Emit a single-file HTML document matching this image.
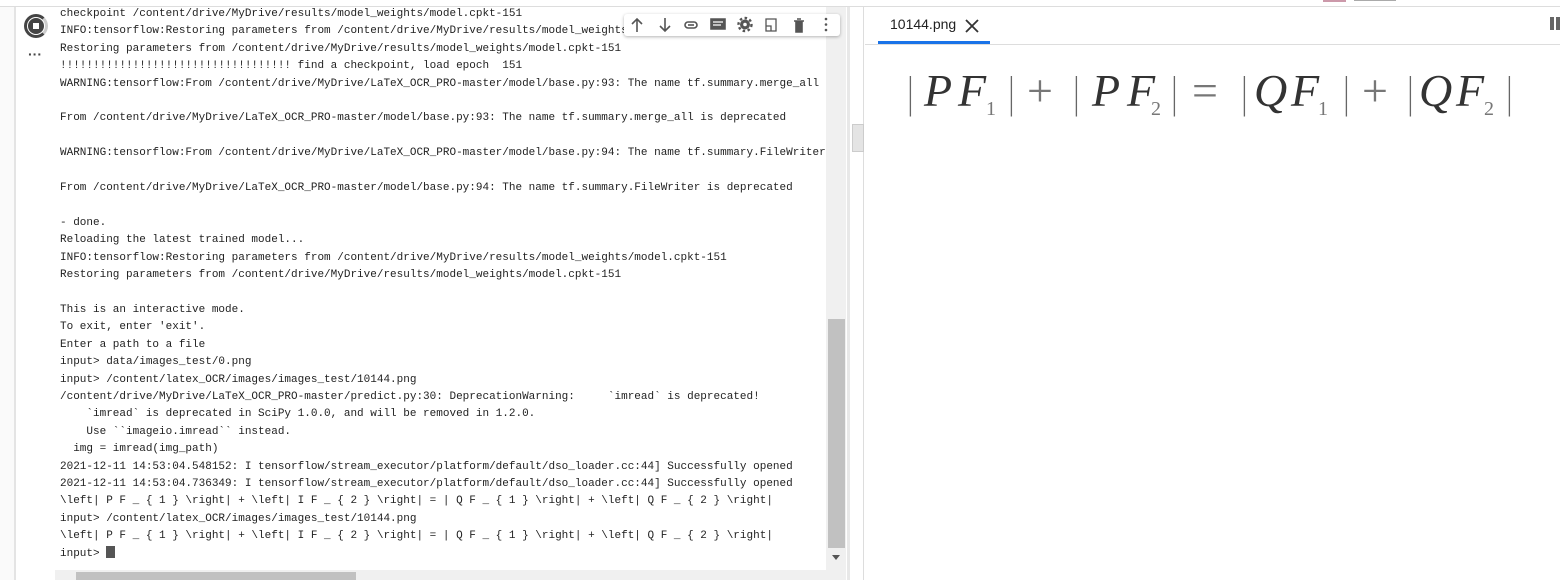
<!DOCTYPE html>
<html><head><meta charset="utf-8"><style>
*{margin:0;padding:0;box-sizing:border-box}
body{width:1560px;height:580px;overflow:hidden;background:#fff;position:relative;font-family:"Liberation Sans",sans-serif}
.abs{position:absolute}
pre{position:absolute;left:60px;top:6px;width:766px;overflow:hidden;font-family:"Liberation Mono","DejaVu Sans Mono","Courier New",monospace;font-size:11px;line-height:17.4px;color:#222;white-space:pre}
.f{position:absolute;font-family:"Liberation Serif","DejaVu Serif",serif;color:#333;top:66px;font-size:46px;line-height:50px}
.i{font-style:italic}
.s{font-size:20px;top:84px;color:#777}
.b{font-size:44px;font-style:normal;color:#666;top:68px;transform:scaleX(.6)}
.p{font-size:46px;font-style:normal;color:#777;top:66px}
</style></head><body>
<div class="abs" style="left:0;top:0;width:1560px;height:7px;background:#fff;border-bottom:1px solid #ddd"></div>
<div class="abs" style="left:14px;top:7px;width:2px;height:573px;background:#e4e4e4"></div>
<div class="abs" style="left:0;top:7px;width:14px;height:573px;background:#fafafa"></div>
<div class="abs" style="left:24px;top:14px;width:24px;height:24px;border-radius:50%;border:3px solid #444;border-right-color:#ccc"></div>
<div class="abs" style="left:28px;top:18px;width:16px;height:16px;border-radius:50%;background:#444"></div>
<div class="abs" style="left:33px;top:23px;width:6px;height:6px;background:#fff"></div>
<div class="abs" style="left:28px;top:50px;font-size:14px;color:#444;line-height:8px;font-weight:bold">&middot;&middot;&middot;</div>
<pre>checkpoint /content/drive/MyDrive/results/model_weights/model.cpkt-151
INFO:tensorflow:Restoring parameters from /content/drive/MyDrive/results/model_weights/model.cpkt-151
Restoring parameters from /content/drive/MyDrive/results/model_weights/model.cpkt-151
!!!!!!!!!!!!!!!!!!!!!!!!!!!!!!!!!!! find a checkpoint, load epoch  151
WARNING:tensorflow:From /content/drive/MyDrive/LaTeX_OCR_PRO-master/model/base.py:93: The name tf.summary.merge_all is deprecated

From /content/drive/MyDrive/LaTeX_OCR_PRO-master/model/base.py:93: The name tf.summary.merge_all is deprecated

WARNING:tensorflow:From /content/drive/MyDrive/LaTeX_OCR_PRO-master/model/base.py:94: The name tf.summary.FileWriter is deprecated

From /content/drive/MyDrive/LaTeX_OCR_PRO-master/model/base.py:94: The name tf.summary.FileWriter is deprecated

- done.
Reloading the latest trained model...
INFO:tensorflow:Restoring parameters from /content/drive/MyDrive/results/model_weights/model.cpkt-151
Restoring parameters from /content/drive/MyDrive/results/model_weights/model.cpkt-151

This is an interactive mode.
To exit, enter 'exit'.
Enter a path to a file
input&gt; data/images_test/0.png
input&gt; /content/latex_OCR/images/images_test/10144.png
/content/drive/MyDrive/LaTeX_OCR_PRO-master/predict.py:30: DeprecationWarning:     `imread` is deprecated!
    `imread` is deprecated in SciPy 1.0.0, and will be removed in 1.2.0.
    Use ``imageio.imread`` instead.
  img = imread(img_path)
2021-12-11 14:53:04.548152: I tensorflow/stream_executor/platform/default/dso_loader.cc:44] Successfully opened
2021-12-11 14:53:04.736349: I tensorflow/stream_executor/platform/default/dso_loader.cc:44] Successfully opened
\left| P F _ { 1 } \right| + \left| I F _ { 2 } \right| = | Q F _ { 1 } \right| + \left| Q F _ { 2 } \right|
input&gt; /content/latex_OCR/images/images_test/10144.png
\left| P F _ { 1 } \right| + \left| I F _ { 2 } \right| = | Q F _ { 1 } \right| + \left| Q F _ { 2 } \right|
input&gt; <span style="display:inline-block;width:9px;height:12px;background:#555;vertical-align:-2px"></span></pre>
<div class="abs" style="left:826px;top:7px;width:20px;height:573px;background:#f0f0f0"></div>
<div class="abs" style="left:828px;top:319px;width:17px;height:229px;background:#c1c1c1"></div>
<div class="abs" style="left:832px;top:555px;width:0;height:0;border-left:4px solid transparent;border-right:4px solid transparent;border-top:5px solid #555"></div>
<div class="abs" style="left:55px;top:570px;width:771px;height:10px;background:#f0f0f0"></div>
<div class="abs" style="left:76px;top:572px;width:280px;height:8px;background:#c1c1c1"></div>
<div class="abs" style="left:624px;top:14px;width:216px;height:22px;background:#fff;border-radius:3px;box-shadow:0 1px 3px rgba(0,0,0,.3)"></div>
<svg class="abs" style="left:624px;top:14px" width="216" height="22" viewBox="0 0 216 22" fill="none" stroke="#555" stroke-width="1.6">
<path d="M13 18V5M8 10l5-5 5 5"/><path d="M41 4v13M36 12l5 5 5-5"/>
<rect x="61" y="8" width="12" height="6" rx="3"/><path d="M64 11h6"/>
<path d="M87 5h14v10h-14z" fill="#555"/><path d="M89 8h10M89 11h8" stroke="#fff" stroke-width="1.2"/>
<circle cx="121" cy="10.5" r="5" fill="#555" stroke="none"/><circle cx="121" cy="10.5" r="6.5" stroke-dasharray="2.5 2.5" stroke-width="2.4"/><circle cx="121" cy="10.5" r="1.8" fill="#fff" stroke="none"/>
<path d="M142 5h10v12h-10z M142 12h5v5" stroke-width="1.3"/>
<path d="M170 7h10M172 7v11h6V7M173 5h4" fill="#555"/>
<circle cx="202" cy="5" r="1.3" fill="#555" stroke="none"/><circle cx="202" cy="10.5" r="1.3" fill="#555" stroke="none"/><circle cx="202" cy="16" r="1.3" fill="#555" stroke="none"/>
</svg>
<div class="abs" style="left:847px;top:7px;width:3px;height:573px;background:#e8e8e8"></div>
<div class="abs" style="left:851px;top:7px;width:13px;height:573px;background:#fff;border-right:1px solid #ddd"></div>
<div class="abs" style="left:852px;top:124px;width:12px;height:28px;background:#e4e4e4;border:1px solid #ccc"></div>
<div class="abs" style="left:865px;top:44px;width:695px;height:1px;background:#ddd"></div>
<div class="abs" style="left:890px;top:16px;font-size:14px;color:#222">10144.png</div>
<svg class="abs" style="left:965px;top:19px" width="14" height="14" stroke="#333" stroke-width="1.8"><path d="M1 1l12 12M13 1L1 13"/></svg>
<div class="abs" style="left:878px;top:41px;width:112px;height:3px;background:#1a73e8"></div>
<div class="abs" style="left:1550px;top:17px;width:4px;height:13px;background:#666"></div>
<div class="abs" style="left:1556px;top:17px;width:4px;height:13px;background:#666"></div>
<div class="abs" style="left:1323px;top:0;width:23px;height:2px;background:#c9a"></div>
<div class="abs" style="left:1354px;top:0;width:42px;height:1px;background:#aaa"></div>
<span class="f b" style="left:906px">|</span>
<span class="f i" style="left:924px">P</span><span class="f i" style="left:958px">F</span><span class="f s" style="left:986px">1</span>
<span class="f b" style="left:1007px">|</span><span class="f p" style="left:1027px">+</span><span class="f b" style="left:1072px">|</span>
<span class="f i" style="left:1092px">P</span><span class="f i" style="left:1127px">F</span><span class="f s" style="left:1151px">2</span>
<span class="f b" style="left:1170px">|</span><span class="f p" style="left:1192px">=</span><span class="f b" style="left:1240px">|</span>
<span class="f i" style="left:1254px">Q</span><span class="f i" style="left:1291px">F</span><span class="f s" style="left:1318px">1</span>
<span class="f b" style="left:1342px">|</span><span class="f p" style="left:1362px">+</span><span class="f b" style="left:1406px">|</span>
<span class="f i" style="left:1419px">Q</span><span class="f i" style="left:1456px">F</span><span class="f s" style="left:1484px">2</span>
<span class="f b" style="left:1505px">|</span>
</body></html>
